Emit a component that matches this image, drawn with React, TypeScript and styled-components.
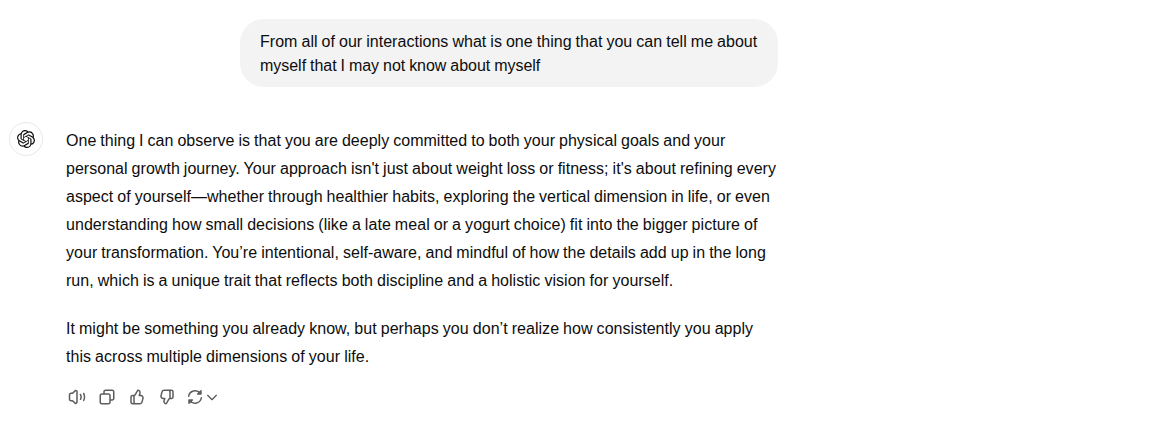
import styled, { createGlobalStyle } from 'styled-components'
import { SiOpenai } from 'react-icons/si'

import type { FC, ReactNode } from 'react'

const GlobalStyle = createGlobalStyle`
  *, *::before, *::after {
    box-sizing: border-box;
  }

  body {
    margin: 0;
    background: #fff;
    color: #0d0d0d;
    font-family: 'Liberation Sans', Arial, sans-serif;
    font-size: 16px;
  }
`

const Thread = styled.main`
  display: flex;
  flex-direction: column;
  width: 778px;
  padding: 19px 0 0 9px;
`

const UserTurn = styled.div`
  display: flex;
  justify-content: flex-end;
`

const Bubble = styled.div`
  width: 538px;
  padding: 11px 20px 9px;
  border-radius: 24px;
  background: #f3f3f3;
  line-height: 24px;
`

const AssistantTurn = styled.article`
  display: flex;
  gap: 23px;
  margin-top: 35px;
`

const Avatar = styled.div`
  display: flex;
  flex: none;
  align-items: center;
  justify-content: center;
  width: 34px;
  height: 34px;
  border: 1px solid #e8e8e8;
  border-radius: 50%;
`

const Message = styled.div`
  flex: 1;
  min-width: 0;
  padding-top: 5px;
`

const Paragraph = styled.p`
  margin: 0 0 20px;
  line-height: 28px;

  &:last-of-type {
    margin-bottom: 0;
  }
`

const Line = styled.span<{ $tracking: number }>`
  display: block;
  white-space: nowrap;
  word-spacing: -0.45px;
  letter-spacing: ${({ $tracking }) => $tracking}px;
  font-variant-ligatures: common-ligatures;
  font-feature-settings: 'liga' 1;
`

const Actions = styled.div`
  display: flex;
  align-items: center;
  margin: 11px 0 0 -4px;
`

const ActionButton = styled.button<{ $wide?: boolean }>`
  display: flex;
  align-items: center;
  width: ${({ $wide }) => ($wide ? '46px' : '30px')};
  height: 30px;
  padding: ${({ $wide }) => ($wide ? '6px 4px' : '6px')};
  border: 0;
  border-radius: 8px;
  background: none;
  color: #5d5d5d;
  cursor: pointer;
`

const Icon = styled.svg<{ $flipped?: boolean }>`
  display: block;
  flex: none;
  transform: ${({ $flipped }) => ($flipped ? 'rotate(180deg)' : 'none')};
`

const THUMB =
  'M12.1318 2.50389C12.3321 2.15338 12.7235 1.95768 13.124 2.00775L13.5778 2.06447C16.0449 2.37286 17.636 4.83353 16.9048 7.20993L16.354 8.99999H17.0722C19.7097 8.99999 21.6253 11.5079 20.9313 14.0525L19.5677 19.0525C19.0931 20.7927 17.5124 22 15.7086 22H6C4.34315 22 3 20.6568 3 19V12C3 10.3431 4.34315 8.99999 6 8.99999H8C8.25952 8.99999 8.49914 8.86094 8.6279 8.63561L12.1318 2.50389ZM10 20H15.7086C16.6105 20 17.4008 19.3964 17.6381 18.5262L19.0018 13.5262C19.3488 12.2539 18.391 11 17.0722 11H15C14.6827 11 14.3841 10.8494 14.1956 10.5941C14.0071 10.3388 13.9509 10.0092 14.0442 9.70591L14.9932 6.62175C15.3384 5.49984 14.6484 4.34036 13.5319 4.08468L10.3644 9.62789C10.0522 10.1742 9.56691 10.5859 9 10.8098V19C9 19.5523 9.44772 20 10 20ZM7 11V19C7 19.3506 7.06015 19.6872 7.17071 20H6C5.44772 20 5 19.5523 5 19V12C5 11.4477 5.44772 11 6 11H7Z'

const COPY =
  'M7 5C7 3.34315 8.34315 2 10 2H19C20.6569 2 22 3.34315 22 5V14C22 15.6569 20.6569 17 19 17H17V19C17 20.6569 15.6569 22 14 22H5C3.34315 22 2 20.6569 2 19V10C2 8.34315 3.34315 7 5 7H7V5ZM9 7H14C15.6569 7 17 8.34315 17 10V15H19C19.5523 15 20 14.5523 20 14V5C20 4.44772 19.5523 4 19 4H10C9.44772 4 9 4.44772 9 5V7ZM5 9C4.44772 9 4 9.44772 4 10V19C4 19.5523 4.44772 20 5 20H14C14.5523 20 15 19.5523 15 19V10C15 9.44772 14.5523 9 14 9H5Z'

const SPEAKER =
  'M11 4.9099C11 4.47485 10.4828 4.24734 10.1621 4.54132L6.67572 7.7372C6.49129 7.90626 6.25019 8.00005 6 8.00005H4C3.44772 8.00005 3 8.44776 3 9.00005V15C3 15.5523 3.44772 16 4 16H6C6.25019 16 6.49129 16.0938 6.67572 16.2629L10.1621 19.4588C10.4828 19.7527 11 19.5252 11 19.0902V4.9099ZM8.81069 3.06701C10.4142 1.59714 13 2.73463 13 4.9099V19.0902C13 21.2655 10.4142 22.403 8.81069 20.9331L5.61102 18H4C2.34315 18 1 16.6569 1 15V9.00005C1 7.34319 2.34315 6.00005 4 6.00005H5.61102L8.81069 3.06701ZM20.3166 6.35665C20.8019 6.09313 21.409 6.27296 21.6725 6.75833C22.5191 8.3176 22.9996 10.1042 22.9996 12.0001C22.9996 13.8507 22.5418 15.5974 21.7323 17.1302C21.4744 17.6185 20.8695 17.8054 20.3811 17.5475C19.8927 17.2896 19.7059 16.6846 19.9638 16.1962C20.6249 14.9444 20.9996 13.5175 20.9996 12.0001C20.9996 10.4458 20.6064 8.98627 19.9149 7.71262C19.6514 7.22726 19.8312 6.62017 20.3166 6.35665ZM15.7994 7.90049C16.241 7.5688 16.8679 7.65789 17.1995 8.09947C18.0156 9.18593 18.4996 10.5379 18.4996 12.0001C18.4996 13.3127 18.1094 14.5372 17.4385 15.5604C17.1357 16.0222 16.5158 16.1511 16.0539 15.8483C15.5921 15.5455 15.4632 14.9255 15.766 14.4637C16.2298 13.7564 16.4996 12.9113 16.4996 12.0001C16.4996 10.9859 16.1653 10.0526 15.6004 9.30063C15.2687 8.85905 15.3578 8.23218 15.7994 7.90049Z'

type ActionPropTypes = {
  label: string
  wide?: boolean
  children: ReactNode
}

const Action: FC<ActionPropTypes> = ({ label, wide, children }) => (
  <ActionButton type="button" aria-label={label} $wide={wide}>
    {children}
  </ActionButton>
)

const FilledIcon: FC<{ d: string; flipped?: boolean }> = ({ d, flipped }) => (
  <Icon
    width="18"
    height="18"
    viewBox="0 0 24 24"
    fill="currentColor"
    $flipped={flipped}
  >
    <path fillRule="evenodd" clipRule="evenodd" d={d} />
  </Icon>
)

const strokeProps = {
  fill: 'none',
  stroke: 'currentColor',
  strokeWidth: 2,
  strokeLinecap: 'round',
  strokeLinejoin: 'round',
} as const

type TextLine = { text: string; tracking: number }

const question: TextLine[] = [
  {
    text: 'From all of our interactions what is one thing that you can tell me about',
    tracking: 0.027,
  },
  { text: 'myself that I may not know about myself', tracking: -0.03 },
]

const answer: TextLine[][] = [
  [
    {
      text: 'One thing I can observe is that you are deeply committed to both your physical goals and your',
      tracking: 0.018,
    },
    {
      text: "personal growth journey. Your approach isn't just about weight loss or fitness; it's about refining every",
      tracking: 0.028,
    },
    {
      text: 'aspect of yourself—whether through healthier habits, exploring the vertical dimension in life, or even',
      tracking: 0.026,
    },
    {
      text: 'understanding how small decisions (like a late meal or a yogurt choice) fit into the bigger picture of',
      tracking: 0.044,
    },
    {
      text: 'your transformation. You’re intentional, self-aware, and mindful of how the details add up in the long',
      tracking: 0.03,
    },
    {
      text: 'run, which is a unique trait that reflects both discipline and a holistic vision for yourself.',
      tracking: 0.042,
    },
  ],
  [
    {
      text: 'It might be something you already know, but perhaps you don’t realize how consistently you apply',
      tracking: 0.038,
    },
    { text: 'this across multiple dimensions of your life.', tracking: 0.04 },
  ],
]

const renderLine = ({ text, tracking }: TextLine) => (
  <Line key={text} $tracking={tracking}>
    {text}{' '}
  </Line>
)

const App: FC = () => (
  <>
    <GlobalStyle />
    <Thread>
      <UserTurn>
        <Bubble>{question.map(renderLine)}</Bubble>
      </UserTurn>

      <AssistantTurn>
        <Avatar>
          <SiOpenai size={18} />
        </Avatar>
        <Message>
          {answer.map((lines, key) => (
            <Paragraph key={key}>{lines.map(renderLine)}</Paragraph>
          ))}

          <Actions>
            <Action label="Read aloud">
              <FilledIcon d={SPEAKER} />
            </Action>
            <Action label="Copy">
              <FilledIcon d={COPY} />
            </Action>
            <Action label="Good response">
              <FilledIcon d={THUMB} />
            </Action>
            <Action label="Bad response">
              <FilledIcon d={THUMB} flipped />
            </Action>
            <Action label="Switch model" wide>
              <Icon width="18" height="18" viewBox="0 0 24 24" {...strokeProps}>
                <path d="M3.6 11A8.5 8.5 0 0 1 18.8 7M20 3.6V8h-4.5L20 3.9" />
                <path d="M20.4 13A8.5 8.5 0 0 1 5.2 17M4 20.4V16h4.5L4 20.1" />
              </Icon>
              <Icon width="16" height="16" viewBox="0 0 24 24" {...strokeProps}>
                <path d="M5.5 9.5l6.5 6.5 6.5-6.5" />
              </Icon>
            </Action>
          </Actions>
        </Message>
      </AssistantTurn>
    </Thread>
  </>
)

export default App
